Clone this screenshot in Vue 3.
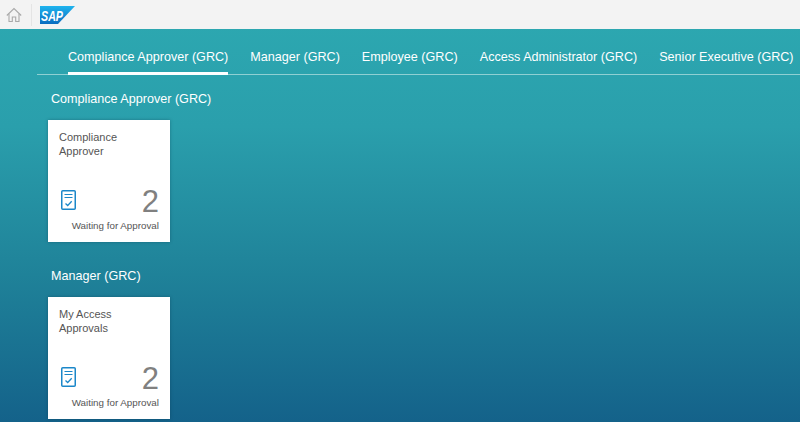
<script setup>
const tabs = [
  'Compliance Approver (GRC)',
  'Manager (GRC)',
  'Employee (GRC)',
  'Access Administrator (GRC)',
  'Senior Executive (GRC)'
]
const groups = [
  { title: 'Compliance Approver (GRC)', tile: ['Compliance', 'Approver'] },
  { title: 'Manager (GRC)', tile: ['My Access', 'Approvals'] }
]
</script>

<template>
  <div class="page">
    <header class="shell">
      <div class="home">
        <svg width="16" height="16" viewBox="0 0 16 16" fill="none" stroke="#a9a9a9" stroke-width="1.1">
          <path d="M0.8 8.5 L8 1.5 L15.2 8.5" />
          <path d="M3 6.8 V14.5 H6.3 V10 H9.7 V14.5 H13 V6.8" />
        </svg>
      </div>
      <svg class="logo" width="35" height="18" viewBox="0 0 35 18">
        <defs>
          <linearGradient id="sapg" x1="0" y1="0" x2="0" y2="1">
            <stop offset="0" stop-color="#1fb4ee" />
            <stop offset="1" stop-color="#0a6cc0" />
          </linearGradient>
        </defs>
        <polygon points="0,0 35,0 18,18 0,18" fill="url(#sapg)" />
        <text x="1" y="14.5" class="logo-text" textLength="22" lengthAdjust="spacingAndGlyphs">SAP</text>
      </svg>
    </header>

    <nav class="tabs">
      <a v-for="(tab, i) in tabs" :key="tab" class="tab" :class="{ active: i === 0 }">{{ tab }}</a>
    </nav>

    <main class="content">
      <section v-for="g in groups" :key="g.title" class="group">
        <h2 class="group-title">{{ g.title }}</h2>
        <article class="tile">
          <div class="tile-title">{{ g.tile[0] }}<br />{{ g.tile[1] }}</div>
          <div class="tile-kpi">
            <svg class="doc" width="15" height="20" viewBox="0 0 15 20" fill="none" stroke="#1b87c9">
              <rect x="0.75" y="0.75" width="13.5" height="18.5" rx="1" stroke-width="1.5" />
              <path d="M3.5 4.5 H11.5 M3.5 7.5 H11.5" stroke-width="1.2" />
              <path d="M4.5 13.5 L6.7 15.5 L10.7 11.3" stroke-width="1.3" />
            </svg>
            <span class="value">2</span>
          </div>
          <div class="tile-foot">Waiting for Approval</div>
        </article>
      </section>
    </main>
  </div>
</template>

<style scoped>
.page {
  width: 800px;
  height: 422px;
  overflow: hidden;
  display: flex;
  flex-direction: column;
  font-family: "Liberation Sans", Arial, sans-serif;
  background: linear-gradient(180deg, #2da9b1 0%, #2a9fac 30%, #1f8299 65%, #14628a 100%);
}
.shell {
  height: 29px;
  flex: none;
  display: flex;
  align-items: flex-start;
  background: #f3f3f3;
  box-sizing: border-box;
}
.home {
  width: 32px;
  height: 22px;
  margin-top: 4px;
  box-sizing: border-box;
  padding: 3px 0 0 6px;
  border-right: 1px solid #e4e4e4;
}
.logo {
  margin: 6px 0 0 8px;
}
.logo-text {
  font: italic bold 15px "Liberation Sans", Arial, sans-serif;
  fill: #ffffff;
}
.tabs {
  margin-left: 37px;
  padding-left: 31px;
  height: 46px;
  flex: none;
  display: flex;
  gap: 22px;
  box-sizing: border-box;
  border-bottom: 1px solid #8fd0d3;
  white-space: nowrap;
}
.tab {
  color: #ffffff;
  font-size: 12.6px;
  line-height: 16px;
  padding-top: 20px;
  height: 45px;
  box-sizing: border-box;
}
.tab.active {
  border-bottom: 3px solid #ffffff;
  height: 46px;
}
.content {
  padding: 16px 0 0 48px;
}
.group {
  margin-bottom: 26px;
}
.group-title {
  margin: 0 0 13px 3px;
  font-size: 12.6px;
  line-height: 16px;
  font-weight: 400;
  color: #ffffff;
}
.tile {
  width: 122px;
  height: 122px;
  box-sizing: border-box;
  background: #ffffff;
  padding: 10px 11px 0 13px;
  display: flex;
  flex-direction: column;
  box-shadow: 0 0 3px rgba(0, 40, 60, 0.35);
}
.tile-title {
  height: 57px;
  margin-left: -2px;
  font-size: 11px;
  line-height: 14px;
  color: #555555;
}
.tile-kpi {
  height: 30px;
  display: flex;
  justify-content: space-between;
  align-items: center;
}
.doc {
  margin-bottom: 4px;
}
.value {
  font-size: 31px;
  line-height: 30px;
  color: #808080;
}
.tile-foot {
  margin-top: 2px;
  text-align: right;
  font-size: 9.8px;
  line-height: 14px;
  color: #555555;
  white-space: nowrap;
}
</style>
